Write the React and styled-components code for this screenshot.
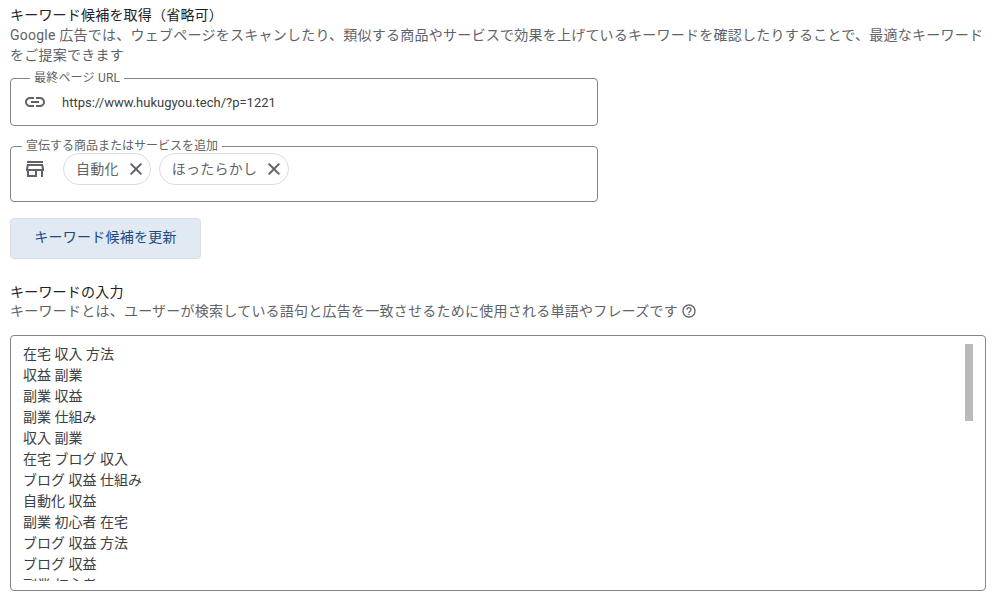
import React from "react";
import styled, { createGlobalStyle } from "styled-components";

const keywords = [
  "在宅 収入 方法",
  "収益 副業",
  "副業 収益",
  "副業 仕組み",
  "収入 副業",
  "在宅 ブログ 収入",
  "ブログ 収益 仕組み",
  "自動化 収益",
  "副業 初心者 在宅",
  "ブログ 収益 方法",
  "ブログ 収益",
  "副業 初心者",
];

const GlobalStyle = createGlobalStyle`
  html, body {
    margin: 0;
    padding: 0;
    background: #fff;
  }
  body {
    font-family: Roboto, "Noto Sans CJK JP", sans-serif;
    font-size: 14px;
    color: #3c4043;
  }
`;

const Page = styled.div`
  width: 995px;
  height: 605px;
  overflow: hidden;
  box-sizing: border-box;
  padding: 5px 9px 0 10px;
`;

const Title = styled.div`
  font-size: 14px;
  line-height: 20px;
  letter-spacing: 0.2px;
  color: #202124;
`;

const Description = styled.div`
  font-size: 14px;
  line-height: 20px;
  letter-spacing: 0.24px;
  color: #5f6368;
`;

const HelpLine = styled(Description)`
  display: flex;
  align-items: center;
  gap: 3px;
  margin-top: -1px;
`;

const Field = styled.fieldset`
  width: 588px;
  height: ${(p) => p.$height}px;
  box-sizing: border-box;
  margin: ${(p) => p.$top}px 0 0;
  padding: 0 12px;
  border: 1px solid #80868b;
  border-radius: 4px;
  min-width: 0;
`;

const Legend = styled.legend`
  margin-left: ${(p) => p.$left}px;
  padding: 0 4px;
  font-size: 12px;
  line-height: 14px;
  letter-spacing: ${(p) => p.$spacing}px;
  color: #5f6368;
`;

const UrlRow = styled.div`
  display: flex;
  align-items: center;
  gap: 15px;
  height: 46px;
  margin-top: -6px;
`;

const ChipRow = styled.div`
  display: flex;
  align-items: flex-start;
  gap: 8px;
`;

const IconSlot = styled.span`
  display: flex;
  width: 24px;
  height: 24px;
  margin-top: ${(p) => p.$top || 0}px;
  margin-right: ${(p) => p.$right || 0}px;
  color: #5f6368;
  flex: none;
`;

const UrlText = styled.span`
  font-size: 13px;
  color: #3c4043;
`;

const Chip = styled.span`
  display: flex;
  align-items: center;
  height: 32px;
  box-sizing: border-box;
  padding: 0 4px 2px 12px;
  border: 1px solid #dadce0;
  border-radius: 16px;
  font-size: 14px;
  letter-spacing: 0.25px;
  color: #5f6368;
`;

const ChipClose = styled.span`
  display: flex;
  margin: 2px 0 0 7px;
  color: #5f6368;

  svg {
    stroke: currentColor;
    stroke-width: 0.6;
  }
`;

const UpdateButton = styled.button`
  display: block;
  width: 191px;
  height: 41px;
  margin-top: 16px;
  padding: 0 0 5px;
  border: 1px solid #dadce0;
  border-radius: 4px;
  background: #e1e9f3;
  color: #1b4a80;
  font-family: inherit;
  font-size: 14px;
  letter-spacing: 0.25px;
`;

const KeywordSection = styled.div`
  margin-top: 23px;
`;

const KeywordBox = styled.div`
  position: relative;
  height: 256px;
  box-sizing: border-box;
  margin-top: 14px;
  padding: 8px 12px 9px;
  border: 1px solid #80868b;
  border-radius: 4px;
`;

const KeywordList = styled.div`
  height: 237px;
  overflow: hidden;
`;

const KeywordLine = styled.div`
  font-size: 14px;
  line-height: 21px;
  color: #3c4043;
`;

const ScrollThumb = styled.div`
  position: absolute;
  top: 8px;
  right: 12px;
  width: 8px;
  height: 77px;
  background: #bababa;
`;

const Svg = ({ size = 24, d }) => (
  <svg width={size} height={size} viewBox="0 0 24 24" fill="currentColor" aria-hidden="true">
    <path d={d} />
  </svg>
);

const LINK =
  "M3.9 12c0-1.71 1.39-3.1 3.1-3.1h4V7H7c-2.76 0-5 2.24-5 5s2.24 5 5 5h4v-1.9H7c-1.71 0-3.1-1.39-3.1-3.1zM8 13h8v-2H8v2zm9-6h-4v1.9h4c1.71 0 3.1 1.39 3.1 3.1s-1.39 3.1-3.1 3.1h-4V17h4c2.76 0 5-2.24 5-5s-2.24-5-5-5z";
const STORE =
  "M4 6h16V4H4v2zm16 1H4l-1 5v2h1v6h10v-6h4v6h2v-6h1v-2l-1-5zm-8 11H6v-4h6v4zm-6.96-6l.6-3h12.72l.6 3H5.04z";
const CLOSE =
  "M19 6.41L17.59 5 12 10.59 6.41 5 5 6.41 10.59 12 5 17.59 6.41 19 12 13.41 17.59 19 19 17.59 13.41 12z";
const HELP =
  "M11 18h2v-2h-2v2zm1-16C6.48 2 2 6.48 2 12s4.48 10 10 10 10-4.48 10-10S17.52 2 12 2zm0 18c-4.41 0-8-3.59-8-8s3.59-8 8-8 8 3.59 8 8-3.59 8-8 8zm0-14c-2.21 0-4 1.79-4 4h2c0-1.1.9-2 2-2s2 .9 2 2c0 2-3 1.75-3 5h2c0-2.25 3-2.5 3-5 0-2.21-1.79-4-4-4z";

function App() {
  return (
    <>
      <GlobalStyle />
      <Page>
        <Title>キーワード候補を取得（省略可）</Title>
        <Description>
          Google 広告では、ウェブページをスキャンしたり、類似する商品やサービスで効果を上げているキーワードを確認したりすることで、最適なキーワードをご提案できます
        </Description>
        <Field $height={55} $top={6}>
          <Legend $left={7} $spacing={0.2}>最終ページ URL</Legend>
          <UrlRow>
            <IconSlot>
              <Svg d={LINK} />
            </IconSlot>
            <UrlText>https://www.hukugyou.tech/?p=1221</UrlText>
          </UrlRow>
        </Field>
        <Field $height={63} $top={13}>
          <Legend $left={-1} $spacing={0}>宣伝する商品またはサービスを追加</Legend>
          <ChipRow>
            <IconSlot $top={4} $right={8}>
              <Svg d={STORE} />
            </IconSlot>
            <Chip>
              自動化
              <ChipClose>
                <Svg size={20} d={CLOSE} />
              </ChipClose>
            </Chip>
            <Chip>
              ほったらかし
              <ChipClose>
                <Svg size={20} d={CLOSE} />
              </ChipClose>
            </Chip>
          </ChipRow>
        </Field>
        <UpdateButton>キーワード候補を更新</UpdateButton>
        <KeywordSection>
          <Title>キーワードの入力</Title>
          <HelpLine>
            キーワードとは、ユーザーが検索している語句と広告を一致させるために使用される単語やフレーズです
            <Svg size={16} d={HELP} />
          </HelpLine>
          <KeywordBox>
            <KeywordList>
              {keywords.map((k) => (
                <KeywordLine key={k}>{k}</KeywordLine>
              ))}
            </KeywordList>
            <ScrollThumb />
          </KeywordBox>
        </KeywordSection>
      </Page>
    </>
  );
}

export default App;
